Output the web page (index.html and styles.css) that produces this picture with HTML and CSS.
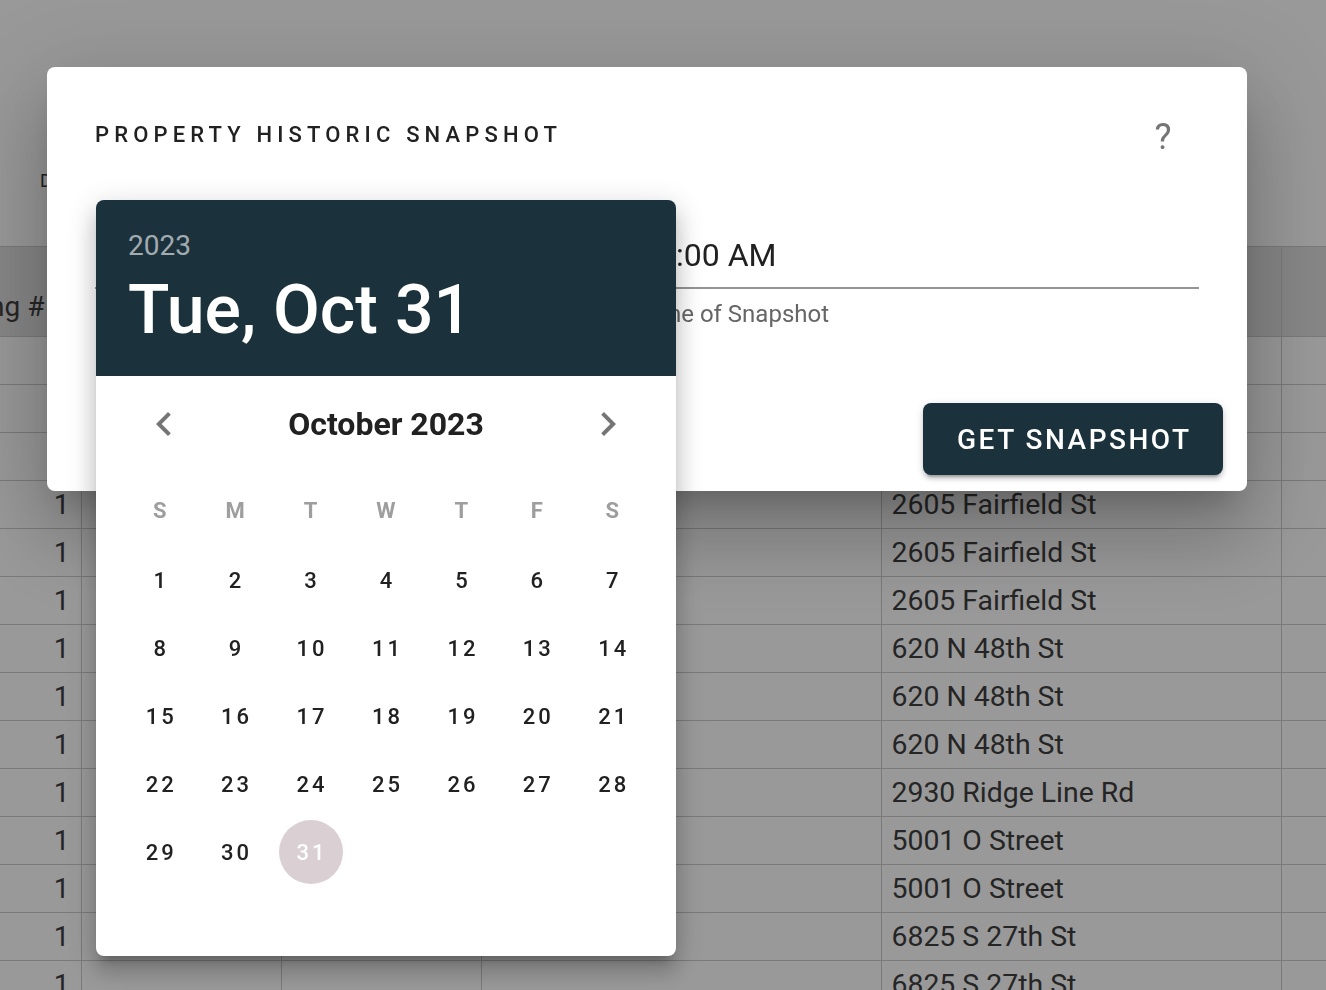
FILE: index.html
```html
<!DOCTYPE html>
<html lang="en">
<head>
<meta charset="utf-8">
<title>Property Historic Snapshot</title>
<link rel="stylesheet" href="styles.css">
</head>
<body>
<div class="app">
  <div class="toolbar"><span class="filter-label">Date Range</span></div>
  <table class="grid">
    <colgroup>
      <col class="c0"><col class="c1"><col class="c2"><col class="c3"><col class="c4"><col class="c5">
    </colgroup>
    <thead>
      <tr>
        <th class="num"><div class="th-end">Listing #</div></th>
        <th>MLS</th><th>Status</th><th>Owner</th><th>Address</th><th></th>
      </tr>
    </thead>
    <tbody>
      <tr><td class="num"></td><td></td><td></td><td></td><td></td><td></td></tr>
      <tr><td class="num"></td><td></td><td></td><td></td><td></td><td></td></tr>
      <tr><td class="num"></td><td></td><td></td><td></td><td></td><td></td></tr>
      <tr><td class="num">1</td><td></td><td></td><td></td><td class="addr">2605 Fairfield St</td><td></td></tr>
      <tr><td class="num">1</td><td></td><td></td><td></td><td class="addr">2605 Fairfield St</td><td></td></tr>
      <tr><td class="num">1</td><td></td><td></td><td></td><td class="addr">2605 Fairfield St</td><td></td></tr>
      <tr><td class="num">1</td><td></td><td></td><td></td><td class="addr">620 N 48th St</td><td></td></tr>
      <tr><td class="num">1</td><td></td><td></td><td></td><td class="addr">620 N 48th St</td><td></td></tr>
      <tr><td class="num">1</td><td></td><td></td><td></td><td class="addr">620 N 48th St</td><td></td></tr>
      <tr><td class="num">1</td><td></td><td></td><td></td><td class="addr">2930 Ridge Line Rd</td><td></td></tr>
      <tr><td class="num">1</td><td></td><td></td><td></td><td class="addr">5001 O Street</td><td></td></tr>
      <tr><td class="num">1</td><td></td><td></td><td></td><td class="addr">5001 O Street</td><td></td></tr>
      <tr><td class="num">1</td><td></td><td></td><td></td><td class="addr">6825 S 27th St</td><td></td></tr>
      <tr><td class="num">1</td><td></td><td></td><td></td><td class="addr">6825 S 27th St</td><td></td></tr>
    </tbody>
  </table>
</div>

<div class="overlay"></div>

<div class="dialog">
  <div class="dlg-head">
    <h2 class="dlg-title">PROPERTY HISTORIC SNAPSHOT</h2>
    <button class="help" type="button">?</button>
  </div>
  <div class="fields">
    <div class="field">
      <div class="input">2023-10-31</div>
      <div class="hint">Date of Snapshot</div>
    </div>
    <div class="field">
      <div class="input">12:00 AM</div>
      <div class="hint">Time of Snapshot</div>
    </div>
  </div>
  <div class="actions">
    <button class="btn-primary" type="button">GET SNAPSHOT</button>
  </div>
</div>

<div class="picker">
  <div class="picker-title">
    <div class="picker-year">2023</div>
    <div class="picker-date">Tue, Oct 31</div>
  </div>
  <div class="picker-nav">
    <button class="nav-btn" type="button" aria-label="Previous month">
      <svg viewBox="0 0 24 24" width="48" height="48"><path d="M15.41,16.58L10.83,12L15.41,7.41L14,6L8,12L14,18L15.41,16.58Z"/></svg>
    </button>
    <div class="picker-month">October 2023</div>
    <button class="nav-btn" type="button" aria-label="Next month">
      <svg viewBox="0 0 24 24" width="48" height="48"><path d="M8.59,16.58L13.17,12L8.59,7.41L10,6L16,12L10,18L8.59,16.58Z"/></svg>
    </button>
  </div>
  <div class="picker-table">
    <div class="weekdays">
      <span>S</span><span>M</span><span>T</span><span>W</span><span>T</span><span>F</span><span>S</span>
    </div>
    <div class="days">
      <span class="day">1</span><span class="day">2</span><span class="day">3</span><span class="day">4</span><span class="day">5</span><span class="day">6</span><span class="day">7</span>
      <span class="day">8</span><span class="day">9</span><span class="day">10</span><span class="day">11</span><span class="day">12</span><span class="day">13</span><span class="day">14</span>
      <span class="day">15</span><span class="day">16</span><span class="day">17</span><span class="day">18</span><span class="day">19</span><span class="day">20</span><span class="day">21</span>
      <span class="day">22</span><span class="day">23</span><span class="day">24</span><span class="day">25</span><span class="day">26</span><span class="day">27</span><span class="day">28</span>
      <span class="day">29</span><span class="day">30</span><span class="day selected">31</span>
    </div>
  </div>
</div>
</body>
</html>
```
FILE: styles.css
```css
* { box-sizing: border-box; }

html, body {
  margin: 0;
  padding: 0;
  width: 1326px;
  height: 990px;
  overflow: hidden;
  background: #ffffff;
  font-family: Roboto, "Noto Sans", "Liberation Sans", sans-serif;
  color: #212121;
}

/* ---------- underlying page ---------- */
.app { width: 1326px; }

.toolbar {
  height: 246px;
  padding: 169px 0 0 40px;
}
.filter-label {
  font-size: 18px;
  line-height: 24px;
  color: #222;
}

.grid {
  border-collapse: collapse;
  table-layout: fixed;
  width: 1326px;
  font-size: 28px;
  color: #2a2a2a;
}
.grid .c0 { width: 81px; }
.grid .c1 { width: 200px; }
.grid .c2 { width: 200px; }
.grid .c3 { width: 400px; }
.grid .c4 { width: 400px; }
.grid .c5 { width: 45px; }

.grid th, .grid td {
  border: 1px solid #c6c6c6;
  padding: 0 8px;
  text-align: left;
  white-space: nowrap;
  overflow: hidden;
}
.grid th:first-child, .grid td:first-child { border-left: 0; }
.grid th:last-child, .grid td:last-child { border-right: 0; }
.grid th {
  height: 90px;
  background: #dedede;
  font-weight: 400;
  vertical-align: bottom;
  padding-bottom: 13px;
}
.grid th.num { padding-right: 36px; }
.th-end {
  display: flex;
  justify-content: flex-end;
}
.grid td { height: 48px; line-height: 46px; }
.grid td.num { text-align: right; padding-right: 11px; }
.grid td.addr { padding-left: 10px; font-size: 28.4px; }

.overlay {
  position: fixed;
  inset: 0;
  background: rgba(33, 33, 33, 0.46);
}

/* ---------- dialog ---------- */
.dialog {
  position: absolute;
  left: 47px;
  top: 67px;
  width: 1200px;
  height: 424px;
  background: #fff;
  border-radius: 8px;
  display: flex;
  flex-direction: column;
  box-shadow: 0 22px 30px -14px rgba(0,0,0,.2), 0 48px 76px 6px rgba(0,0,0,.14), 0 18px 92px 16px rgba(0,0,0,.12);
}

.dlg-head {
  margin-top: 44px;
  height: 48px;
  padding: 0 48px;
  display: flex;
  align-items: center;
  justify-content: space-between;
}
.dlg-title {
  margin: 0;
  font-size: 22px;
  line-height: 32px;
  font-weight: 500;
  letter-spacing: 5.15px;
  color: #212121;
}
.help {
  width: 48px;
  height: 48px;
  margin-right: 12px;
  padding: 4px 0 0;
  border: 0;
  background: transparent;
  font-family: Roboto, sans-serif;
  font-size: 36px;
  line-height: 44px;
  font-weight: 400;
  color: #757575;
}

.fields {
  margin-top: 76px;
  padding: 0 48px;
  display: grid;
  grid-template-columns: 521px 1fr;
  column-gap: 24px;
}
.input {
  font-size: 32px;
  line-height: 40px;
  padding-bottom: 12px;
  border-bottom: 2px solid #949494;
  color: #212121;
}
.hint {
  margin-top: 11px;
  font-size: 24px;
  line-height: 28px;
  color: #666;
}

.actions {
  margin-top: auto;
  padding: 0 24px 16px;
  display: flex;
  justify-content: flex-end;
}
.btn-primary {
  width: 300px;
  height: 72px;
  padding: 0;
  border: 0;
  border-radius: 8px;
  background: #1b323c;
  color: #fff;
  font-family: Roboto, sans-serif;
  font-size: 28px;
  font-weight: 500;
  letter-spacing: 2.5px;
  text-indent: 2.5px;
  box-shadow: 0 6px 2px -4px rgba(0,0,0,.2), 0 4px 4px 0 rgba(0,0,0,.14), 0 2px 10px 0 rgba(0,0,0,.12);
}

/* ---------- date picker ---------- */
.picker {
  position: absolute;
  left: 96px;
  top: 200px;
  width: 580px;
  height: 756px;
  background: #fff;
  border-radius: 8px;
  overflow: hidden;
  box-shadow: 0 10px 10px -6px rgba(0,0,0,.2), 0 16px 20px 2px rgba(0,0,0,.14), 0 6px 28px 4px rgba(0,0,0,.12);
}

.picker-title {
  height: 176px;
  background: #1b323c;
  padding: 32px 32px 0;
  color: #fff;
}
.picker-year {
  font-size: 28px;
  line-height: 28px;
  color: rgba(255,255,255,.6);
}
.picker-date {
  margin-top: 16px;
  font-size: 68px;
  line-height: 68px;
  font-weight: 500;
  color: #fff;
}

.picker-nav {
  margin-top: 24px;
  height: 48px;
  padding: 0 44px;
  display: flex;
  align-items: center;
  justify-content: space-between;
}
.nav-btn {
  width: 48px;
  height: 48px;
  padding: 0;
  border: 0;
  background: transparent;
  display: flex;
}
.nav-btn svg { fill: #757575; }
.picker-month {
  font-size: 32px;
  font-weight: 700;
  color: #212121;
}

.picker-table {
  margin-top: 40px;
  padding: 0 26px;
}
.weekdays {
  height: 44px;
  display: grid;
  grid-template-columns: repeat(7, 1fr);
  align-items: center;
  justify-items: center;
  font-size: 22px;
  font-weight: 700;
  color: #9e9e9e;
}
.days {
  margin-top: 14px;
  display: grid;
  grid-template-columns: repeat(7, 1fr);
  grid-auto-rows: 68px;
  align-items: center;
  justify-items: center;
}
.day {
  width: 64px;
  height: 64px;
  border-radius: 50%;
  display: flex;
  align-items: center;
  justify-content: center;
  font-size: 22px;
  font-weight: 500;
  letter-spacing: 3px;
  padding-left: 3px;
  color: #212121;
}
.day.selected {
  background: #dacfd3;
  color: #fff;
}
```
